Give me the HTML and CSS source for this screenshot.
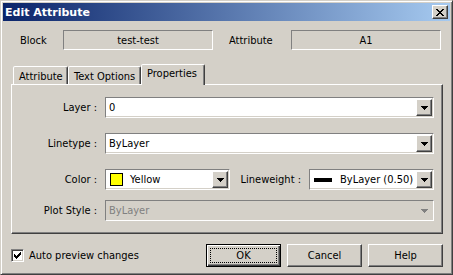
FILE: index.html
```html
<!DOCTYPE html>
<html>
<head>
<meta charset="utf-8">
<link rel="stylesheet" href="styles.css">
</head>
<body>
<div class="window">
  <div class="titlebar">
    <span class="title">Edit Attribute</span>
    <div class="close">
      <svg width="8" height="7" viewBox="0 0 8 7" shape-rendering="crispEdges"><path d="M0 0h2v1h-2zM6 0h2v1h-2zM1 1h2v1h-2zM5 1h2v1h-2zM2 2h4v1h-4zM3 3h2v1h-2zM2 4h4v1h-4zM1 5h2v1h-2zM5 5h2v1h-2zM0 6h2v1h-2zM6 6h2v1h-2z" fill="#000"/></svg>
    </div>
  </div>
  <div class="header">
    <span class="hlabel hl-block">Block</span>
    <div class="static">test-test</div>
    <span class="hlabel hl-attr">Attribute</span>
    <div class="static">A1</div>
  </div>
  <div class="tabs">
    <div class="tab tab-attr">Attribute</div>
    <div class="tab tab-text">Text Options</div>
    <div class="tab tab-props active">Properties</div>
  </div>
  <div class="panel">
    <div class="row row-layer">
      <span class="lbl">Layer :</span>
      <div class="combo combo-wide">
        <span class="val">0</span>
        <span class="ddbtn"><svg width="7" height="4" shape-rendering="crispEdges"><path d="M0 0h7v1h-7zM1 1h5v1h-5zM2 2h3v1h-3zM3 3h1v1h-1z" fill="#000"/></svg></span>
      </div>
    </div>
    <div class="row row-linetype">
      <span class="lbl">Linetype :</span>
      <div class="combo combo-wide">
        <span class="val">ByLayer</span>
        <span class="ddbtn"><svg width="7" height="4" shape-rendering="crispEdges"><path d="M0 0h7v1h-7zM1 1h5v1h-5zM2 2h3v1h-3zM3 3h1v1h-1z" fill="#000"/></svg></span>
      </div>
    </div>
    <div class="row row-color">
      <span class="lbl">Color :</span>
      <div class="combo combo-color">
        <span class="swatch"></span>
        <span class="val val-color">Yellow</span>
        <span class="ddbtn"><svg width="7" height="4" shape-rendering="crispEdges"><path d="M0 0h7v1h-7zM1 1h5v1h-5zM2 2h3v1h-3zM3 3h1v1h-1z" fill="#000"/></svg></span>
      </div>
      <span class="lbl lbl-lw">Lineweight :</span>
      <div class="combo combo-lw">
        <span class="lwline"></span>
        <span class="val val-lw">ByLayer (0.50)</span>
        <span class="ddbtn"><svg width="7" height="4" shape-rendering="crispEdges"><path d="M0 0h7v1h-7zM1 1h5v1h-5zM2 2h3v1h-3zM3 3h1v1h-1z" fill="#000"/></svg></span>
      </div>
    </div>
    <div class="row row-plot">
      <span class="lbl">Plot Style :</span>
      <div class="combo combo-wide disabled">
        <span class="val">ByLayer</span>
        <span class="ddarrow"><svg width="7" height="4" shape-rendering="crispEdges"><path d="M0 0h7v1h-7zM1 1h5v1h-5zM2 2h3v1h-3zM3 3h1v1h-1z" fill="#808080"/></svg></span>
      </div>
    </div>
  </div>
  <div class="footer">
    <div class="check">
      <span class="box"><svg width="7" height="7" shape-rendering="crispEdges"><path d="M6 0h1v3h-1zM5 1h1v3h-1zM4 2h1v3h-1zM3 3h1v3h-1zM2 4h1v3h-1zM1 3h1v3h-1zM0 2h1v3h-1z" fill="#000"/></svg></span>
      <span class="check-label">Auto preview changes</span>
    </div>
    <div class="buttons">
      <div class="btn btn-default">OK<span class="focus"></span></div>
      <div class="btn">Cancel</div>
      <div class="btn">Help</div>
    </div>
  </div>
</div>
</body>
</html>
```

FILE: styles.css
```css
* { box-sizing: border-box; }
html, body { margin: 0; padding: 0; }
body {
  background: #d4d0c8;
  font-family: "DejaVu Sans Condensed", "Liberation Sans", sans-serif;
  font-size: 11px;
  color: #000;
}
.window {
  width: 453px;
  height: 275px;
  border: 1px solid;
  border-color: #d4d0c8 #404040 #404040 #d4d0c8;
  box-shadow: inset 1px 1px #fff, inset -1px -1px #808080;
  padding: 2px;
  display: flex;
  flex-direction: column;
  background: #d4d0c8;
}
.titlebar {
  height: 18px;
  display: flex;
  align-items: center;
  justify-content: space-between;
  padding: 0 2px;
  background: linear-gradient(to right, #0a246a, #a6caf0);
}
.title {
  color: #fff;
  font-family: "DejaVu Sans", sans-serif;
  font-weight: bold;
  font-size: 11px;
}
.close {
  width: 16px;
  height: 14px;
  background: #d4d0c8;
  border: 1px solid;
  border-color: #fff #404040 #404040 #fff;
  box-shadow: inset -1px -1px #808080;
  display: flex;
  align-items: center;
  justify-content: center;
}
.close svg { display: block; margin-left: -1px; }
.header {
  display: flex;
  align-items: center;
  margin-top: 9px;
  height: 20px;
  padding-left: 17px;
}
.hl-block { width: 43px; }
.hl-attr { width: 62px; margin-left: 16px; }
.static {
  width: 150px;
  height: 20px;
  border: 1px solid;
  border-color: #808080 #fff #fff #808080;
  display: flex;
  align-items: center;
  justify-content: center;
}
.tabs {
  display: flex;
  align-items: flex-end;
  height: 20px;
  margin-top: 14px;
  padding-left: 10px;
  position: relative;
  z-index: 1;
}
.tab {
  height: 18px;
  border: 1px solid;
  border-bottom: none;
  border-color: #fff #404040 transparent #fff;
  box-shadow: inset -1px 0 #808080;
  border-radius: 2px 2px 0 0;
  padding-left: 5px;
  padding-top: 1px;
  display: flex;
  align-items: center;
  background: #d4d0c8;
}
.tab-attr { width: 55px; }
.tab-text { width: 73px; }
.tab-props { width: 64px; }
.tab.active {
  height: 21px;
  margin-bottom: -1px;
  padding-top: 0;
  padding-bottom: 3px;
}
.panel {
  margin-left: 8px;
  width: 432px;
  height: 150px;
  border: 1px solid;
  border-color: #fff #404040 #404040 #fff;
  box-shadow: inset -1px -1px #808080;
  padding-top: 12px;
  display: flex;
  flex-direction: column;
}
.row {
  display: flex;
  align-items: center;
  height: 21px;
}
.row-linetype, .row-color { margin-top: 15px; }
.row-plot { margin-top: 10px; }
.lbl {
  width: 85px;
  text-align: right;
  margin-right: 8px;
}
.lbl-lw { width: 71px; }
.combo {
  height: 21px;
  background: #fff;
  border: 1px solid;
  border-color: #808080 #fff #fff #808080;
  box-shadow: inset -1px -1px #d4d0c8;
  padding: 1px;
  display: flex;
  align-items: center;
}
.combo-wide { width: 329px; }
.combo-color { width: 125px; }
.combo-lw { width: 125px; }
.val { flex: 1; padding-left: 2px; white-space: nowrap; }
.ddbtn {
  width: 16px;
  height: 17px;
  background: #d4d0c8;
  border: 1px solid;
  border-color: #fff #404040 #404040 #fff;
  box-shadow: inset -1px -1px #808080;
  display: flex;
  align-items: center;
  justify-content: center;
}
.ddbtn svg, .ddarrow svg { display: block; }
.swatch {
  width: 13px;
  height: 13px;
  background: #ffff00;
  border: 1px solid #000;
  margin-left: 3px;
}
.val-color { padding-left: 7px; }
.lwline {
  width: 18px;
  height: 4px;
  background: #000;
  margin-left: 3px;
}
.val-lw { padding-left: 8px; }
.combo.disabled { background: #d4d0c8; color: #808080; box-shadow: none; }
.ddarrow {
  width: 16px;
  height: 17px;
  display: flex;
  align-items: center;
  justify-content: center;
}
.footer {
  margin-top: 10px;
  height: 23px;
  display: flex;
  align-items: center;
  padding-left: 8px;
  padding-right: 7px;
}
.check { display: flex; align-items: center; }
.box {
  width: 13px;
  height: 13px;
  background: #fff;
  border: 1px solid;
  border-color: #808080 #fff #fff #808080;
  box-shadow: inset 1px 1px #404040, inset -1px -1px #d4d0c8;
  display: flex;
  align-items: center;
  justify-content: center;
}
.check-label { margin-left: 5px; }
.buttons { margin-left: auto; display: flex; gap: 6px; }
.btn {
  width: 75px;
  height: 23px;
  border: 1px solid;
  border-color: #fff #404040 #404040 #fff;
  box-shadow: inset -1px -1px #808080;
  display: flex;
  align-items: center;
  justify-content: center;
  position: relative;
}
.btn-default {
  border-color: #000;
  box-shadow: inset 1px 1px #fff, inset -1px -1px #404040, inset -2px -2px #808080;
}
.focus {
  position: absolute;
  left: 3px; top: 3px; right: 3px; bottom: 3px;
  border: 1px dotted #000;
}
```
